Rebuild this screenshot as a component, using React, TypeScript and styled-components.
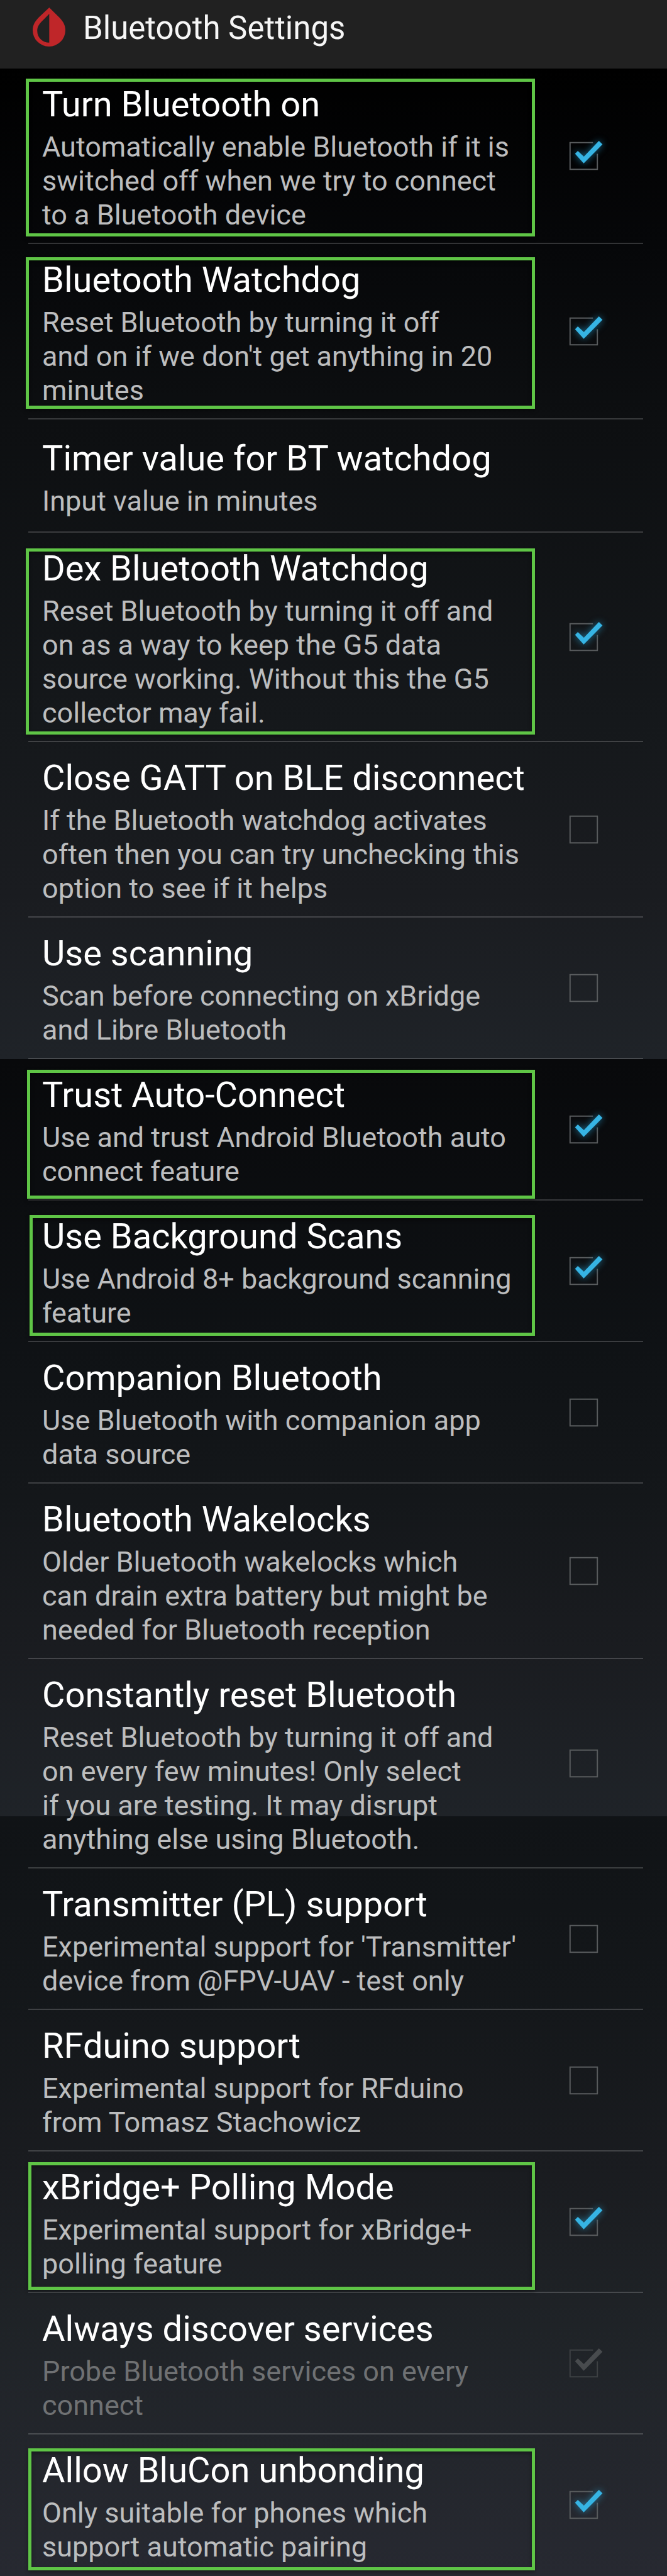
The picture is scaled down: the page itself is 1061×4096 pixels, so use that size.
import React from "react";
import styled, { createGlobalStyle, css } from "styled-components";

const GlobalStyle = createGlobalStyle`
  *, *::before, *::after { box-sizing: border-box; }
  body { margin: 0; background: #000; }
`;

const Page = styled.div`
  font-family: Roboto, "Noto Sans", sans-serif;
  color: #fff;
`;

const AppBar = styled.header`
  display: flex;
  align-items: flex-start;
  gap: 28px;
  padding: 12px 52px 31px;
  background: #212121;
`;

const AppIcon = styled.svg`
  flex: none;
  width: 52px;
  height: 62px;
`;

const AppTitle = styled.h1`
  margin: 0;
  font-size: 51px;
  line-height: 66px;
  font-weight: 400;
  color: #f6f6f6;
`;

const List = styled.ul`
  margin: 0;
  padding: 0 38px 0 45px;
  list-style: none;
  background: linear-gradient(
    to bottom,
    #000000 0%,
    #060709 7%,
    #0d0f11 14%,
    #15181b 26%,
    #1a1c20 33%,
    #1f2328 39.5%,
    #08090b 39.5%,
    #0f1215 51%,
    #14171a 57%,
    #1a1c20 63%,
    #1f2328 69.7%,
    #101316 69.7%,
    #14171a 77%,
    #1a1c20 84%,
    #1f2327 90%,
    #272931 100%
  );
`;

const Item = styled.li`
  position: relative;
  border-bottom: 2px solid rgba(255, 255, 255, 0.18);

  &:last-child {
    border-bottom-color: transparent;
  }
`;

const rowStyles = css`
  display: flex;
  align-items: center;
  justify-content: space-between;
  width: 100%;
  min-height: 178px;
  padding: 0 57px 0 22px;
`;

const CheckRow = styled.label`
  ${rowStyles}
`;

const ButtonRow = styled.button`
  ${rowStyles}
  border: 0;
  background: none;
  color: inherit;
  font: inherit;
  text-align: left;
`;

const Texts = styled.span`
  display: flex;
  flex-direction: column;
  gap: 9px;
  padding: 25px 0 17px;
`;

const Title = styled.span`
  font-size: 56px;
  line-height: 64px;
`;

const Summary = styled.span<{ $dim?: boolean }>`
  font-size: 45px;
  line-height: 54px;
  white-space: pre-line;
  color: ${(p) => (p.$dim ? "#6f7173" : "#bcbdbe")};
`;

const CheckCell = styled.span`
  display: grid;
  flex: none;
  width: 75px;
  height: 75px;

  > * {
    grid-area: 1 / 1;
    width: 100%;
    height: 100%;
    margin: 0;
  }
`;

const CheckInput = styled.input`
  appearance: none;
  opacity: 0;
`;

const CheckArt = styled.svg<{ $glow: boolean }>`
  overflow: visible;
  pointer-events: none;

  .tick {
    filter: ${(p) => (p.$glow ? "drop-shadow(0 0 6px rgba(40, 170, 225, 0.65))" : "none")};
  }
`;

type Frame = { top: number; bottom: number; left: number };

const Highlight = styled.span<{ $frame: Frame }>`
  position: absolute;
  top: ${(p) => p.$frame.top}px;
  bottom: ${(p) => p.$frame.bottom}px;
  left: ${(p) => p.$frame.left}px;
  right: 172px;
  border: 5px solid #5fc546;
  box-shadow: 0 3px 6px rgba(0, 0, 0, 0.35), inset 0 3px 6px rgba(0, 0, 0, 0.35);
  pointer-events: none;
`;

type Setting = {
  title: string;
  summary: string;
  checked?: boolean;
  disabled?: boolean;
  frame?: Frame;
};

const settings: Setting[] = [
  {
    title: "Turn Bluetooth on",
    summary: "Automatically enable Bluetooth if it is\nswitched off when we try to connect\nto a Bluetooth device",
    checked: true,
    frame: { top: 16, bottom: 10, left: -4 },
  },
  {
    title: "Bluetooth Watchdog",
    summary: "Reset Bluetooth by turning it off\nand on if we don't get anything in 20\nminutes",
    checked: true,
    frame: { top: 21, bottom: 15, left: -4 },
  },
  { title: "Timer value for BT watchdog", summary: "Input value in minutes" },
  {
    title: "Dex Bluetooth Watchdog",
    summary: "Reset Bluetooth by turning it off and\non as a way to keep the G5 data\nsource working. Without this the G5\ncollector may fail.",
    checked: true,
    frame: { top: 25, bottom: 10, left: -4 },
  },
  {
    title: "Close GATT on BLE disconnect",
    summary: "If the Bluetooth watchdog activates\noften then you can try unchecking this\noption to see if it helps",
    checked: false,
  },
  {
    title: "Use scanning",
    summary: "Scan before connecting on xBridge\nand Libre Bluetooth",
    checked: false,
  },
  {
    title: "Trust Auto-Connect",
    summary: "Use and trust Android Bluetooth auto\nconnect feature",
    checked: true,
    frame: { top: 17, bottom: 1, left: -2 },
  },
  {
    title: "Use Background Scans",
    summary: "Use Android 8+ background scanning\nfeature",
    checked: true,
    frame: { top: 23, bottom: 8, left: 2 },
  },
  {
    title: "Companion Bluetooth",
    summary: "Use Bluetooth with companion app\ndata source",
    checked: false,
  },
  {
    title: "Bluetooth Wakelocks",
    summary: "Older Bluetooth wakelocks which\ncan drain extra battery but might be\nneeded for Bluetooth reception",
    checked: false,
  },
  {
    title: "Constantly reset Bluetooth",
    summary: "Reset Bluetooth by turning it off and\non every few minutes! Only select\nif you are testing. It may disrupt\nanything else using Bluetooth.",
    checked: false,
  },
  {
    title: "Transmitter (PL) support",
    summary: "Experimental support for 'Transmitter'\ndevice from @FPV-UAV - test only",
    checked: false,
  },
  {
    title: "RFduino support",
    summary: "Experimental support for RFduino\nfrom Tomasz Stachowicz",
    checked: false,
  },
  {
    title: "xBridge+ Polling Mode",
    summary: "Experimental support for xBridge+\npolling feature",
    checked: true,
    frame: { top: 17, bottom: 3, left: 0 },
  },
  {
    title: "Always discover services",
    summary: "Probe Bluetooth services on every\nconnect",
    checked: true,
    disabled: true,
  },
  {
    title: "Allow BluCon unbonding",
    summary: "Only suitable for phones which\nsupport automatic pairing",
    checked: true,
    frame: { top: 22, bottom: 7, left: 0 },
  },
];

function DropIcon() {
  return (
    <AppIcon viewBox="0 0 158 188" aria-hidden="true">
      <path
        fill="#bf2629"
        fillRule="evenodd"
        d="M80 0 L124 43 C146 64 158 84 158 109 A79 79 0 0 1 0 109 C0 84 12 64 34 43 Z M80 30 L54 57 C34 76 22 90 22 112 C22 146 48 169 80 169 Z"
      />
    </AppIcon>
  );
}

function Checkbox({ initial, disabled }: { initial: boolean; disabled?: boolean }) {
  const [on, setOn] = React.useState(initial);
  return (
    <CheckCell>
      <CheckInput type="checkbox" checked={on} disabled={disabled} onChange={() => setOn(!on)} />
      <CheckArt viewBox="0 0 76 76" $glow={!disabled} aria-hidden="true">
        <path
          fill="none"
          stroke={disabled ? "#3d4043" : "#585b5d"}
          strokeWidth="2"
          d={on ? "M53 17 H16 V60 H60 V35" : "M16 17 H60 V60 H16 Z"}
        />
        {on && (
          <path
            className="tick"
            fill={disabled ? "#484b4e" : "#36b4e4"}
            d="M24 35 L28.5 30.5 L38.3 39.5 L62.5 14.3 L68.3 19.8 L38 50.3 Z"
          />
        )}
      </CheckArt>
    </CheckCell>
  );
}

function SettingItem({ item }: { item: Setting }) {
  const texts = (
    <Texts>
      <Title>{item.title}</Title>
      <Summary $dim={item.disabled}>{item.summary}</Summary>
    </Texts>
  );
  return (
    <Item>
      {item.checked === undefined ? (
        <ButtonRow type="button">{texts}</ButtonRow>
      ) : (
        <CheckRow>
          {texts}
          <Checkbox initial={item.checked} disabled={item.disabled} />
        </CheckRow>
      )}
      {item.frame && <Highlight $frame={item.frame} />}
    </Item>
  );
}

export default function App() {
  return (
    <Page>
      <GlobalStyle />
      <AppBar>
        <DropIcon />
        <AppTitle>Bluetooth Settings</AppTitle>
      </AppBar>
      <List>
        {settings.map((item) => (
          <SettingItem key={item.title} item={item} />
        ))}
      </List>
    </Page>
  );
}
